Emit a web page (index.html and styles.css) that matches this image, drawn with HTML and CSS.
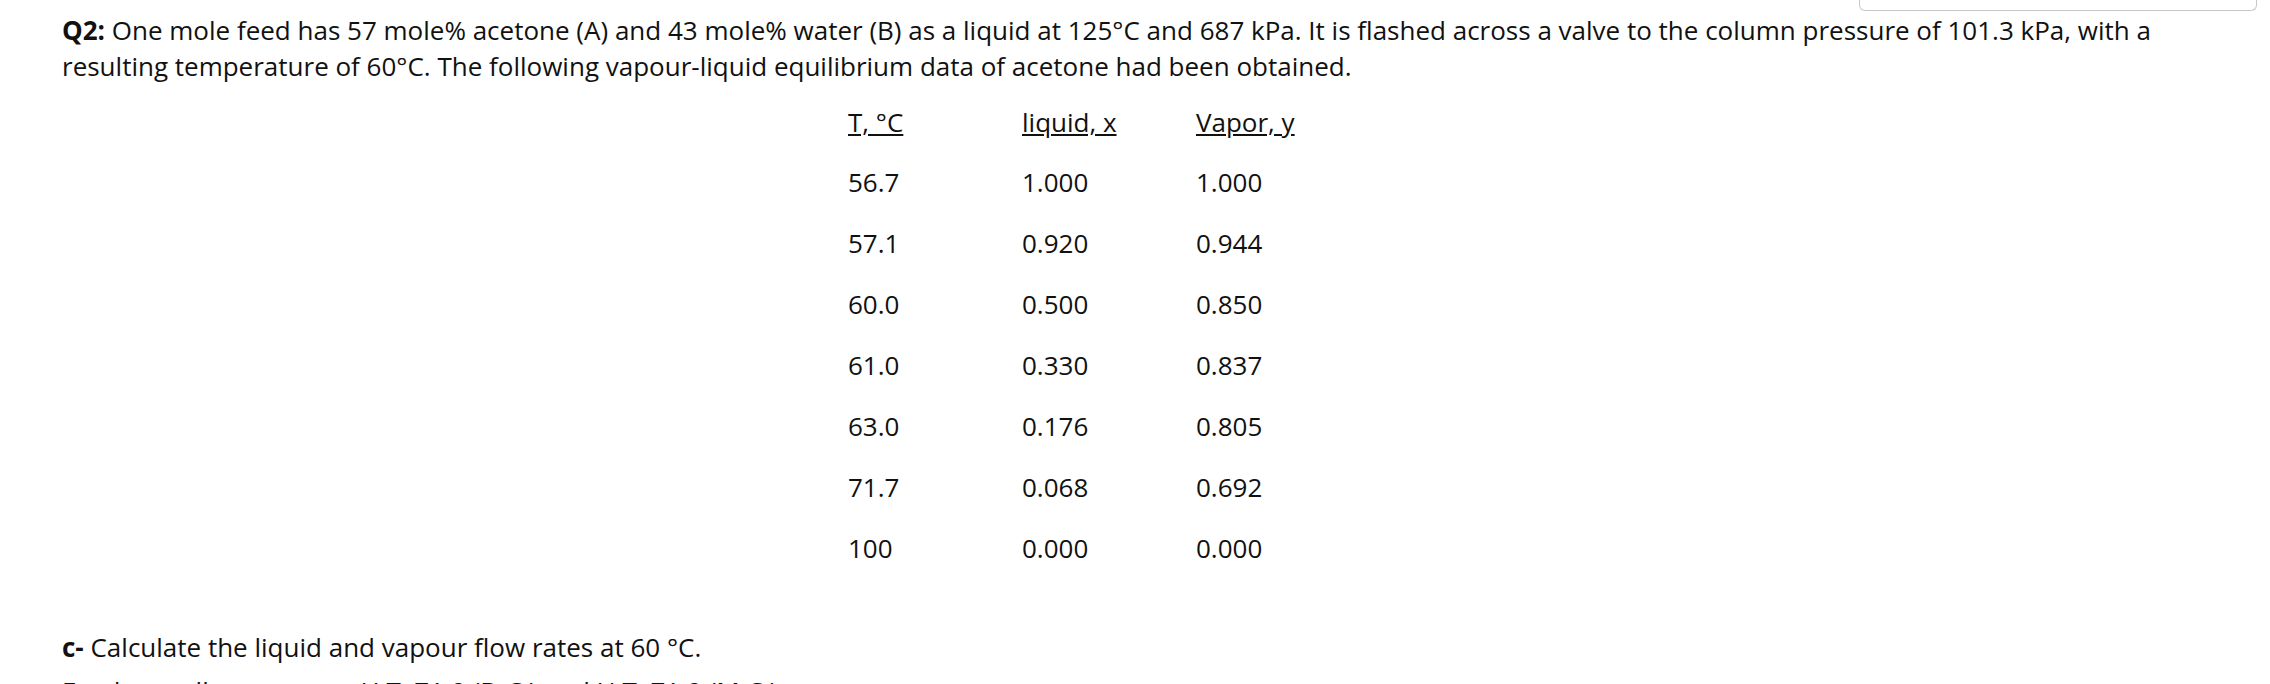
FILE: index.html
```
<!DOCTYPE html>
<html lang="en">
  <head>
    <meta charset="UTF-8" />
    <meta name="viewport" content="width=device-width, initial-scale=1.0" />
    <title>Q2</title>
    <link rel="stylesheet" href="styles.css">
  </head>
  <body>
    <div class="topBar">
      <div class="tab"></div>
    </div>
    <div class="question">
      <p class="text">
        <b>Q2:</b> One mole feed has 57 mole% acetone (A) and 43 mole% water (B) as a liquid at 125°C and 687 kPa. It is flashed across a valve to the column pressure of 101.3 kPa, with a resulting temperature of 60°C. The following vapour-liquid equilibrium data of acetone had been obtained.
      </p>
      <table class="data">
        <tr class="head">
          <td><u>T, °C</u></td>
          <td><u>liquid, x</u></td>
          <td><u>Vapor, y</u></td>
        </tr>
        <tr><td>56.7</td><td>1.000</td><td>1.000</td></tr>
        <tr><td>57.1</td><td>0.920</td><td>0.944</td></tr>
        <tr><td>60.0</td><td>0.500</td><td>0.850</td></tr>
        <tr><td>61.0</td><td>0.330</td><td>0.837</td></tr>
        <tr><td>63.0</td><td>0.176</td><td>0.805</td></tr>
        <tr><td>71.7</td><td>0.068</td><td>0.692</td></tr>
        <tr><td>100</td><td>0.000</td><td>0.000</td></tr>
      </table>
      <p class="text part">
        <b>c-</b> Calculate the liquid and vapour flow rates at 60 °C.
      </p>
      <p class="text next">
        Feed as well as streams: H.T. 71.0 (D.C.) and H.T. 71.0 (M.C.)
      </p>
    </div>
  </body>
</html>
```

FILE: styles.css
```
body {
  margin: 0;
  background: #fff;
  color: #111;
  font-family: "Open Sans", "Noto Sans", sans-serif;
  overflow: hidden;
}
.topBar {
  display: flex;
  justify-content: flex-end;
  height: 12px;
  padding-right: 13px;
}
.tab {
  width: 396px;
  height: 10px;
  border: 1px solid #c8c8c8;
  border-top: none;
  border-radius: 0 0 6px 6px;
}
.question {
  padding-left: 62px;
}
.text {
  margin: 0;
  max-width: 2150px;
  font-size: 26px;
  line-height: 36px;
}
.data {
  border-collapse: collapse;
  margin: 9px 0 0 786px;
  font-size: 26px;
}
.data td {
  padding: 0;
  height: 61px;
  width: 174px;
  vertical-align: middle;
}
.data .head td {
  height: 58px;
}
.part {
  margin-top: 51px;
}
.next {
  margin-top: 8px;
}
```
